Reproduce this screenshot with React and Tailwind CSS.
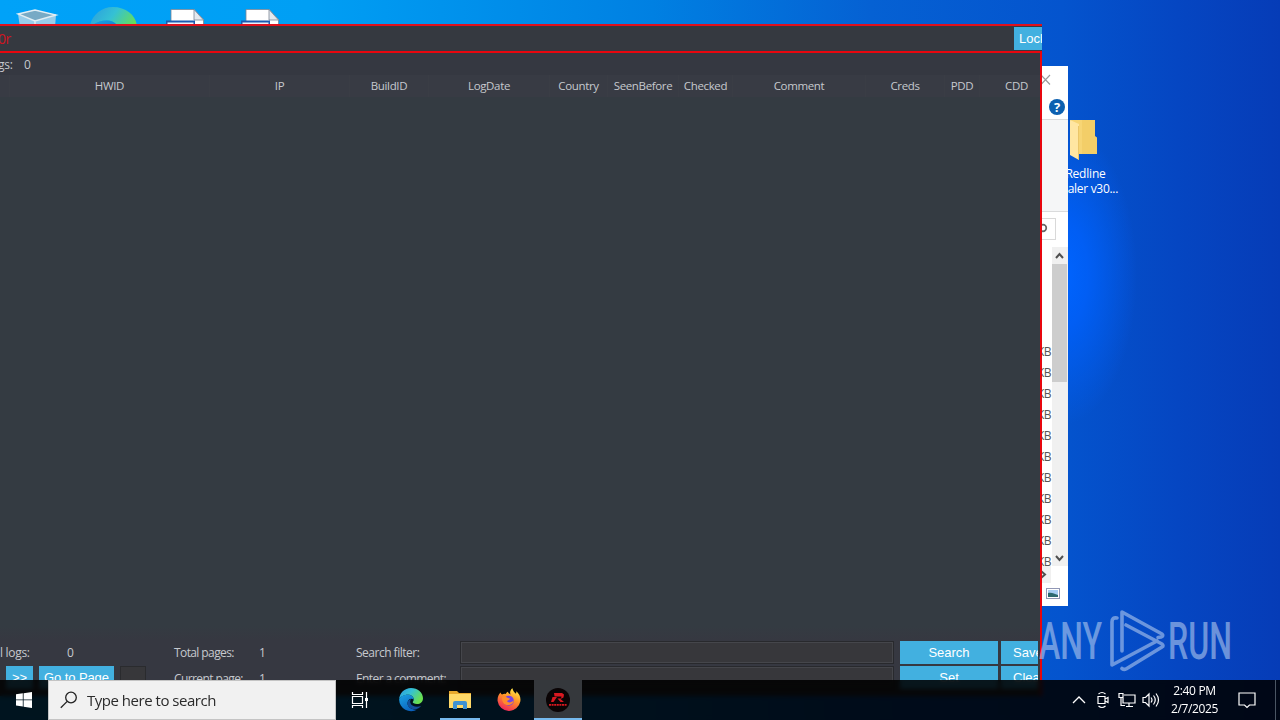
import React from 'react';

const columns = [
  { label: '', width: 'w-[10px]' },
  { label: 'HWID', width: 'w-[200px]' },
  { label: 'IP', width: 'w-[140px]' },
  { label: 'BuildID', width: 'w-[79px]' },
  { label: 'LogDate', width: 'w-[121px]' },
  { label: 'Country', width: 'w-[58px]' },
  { label: 'SeenBefore', width: 'w-[71px]' },
  { label: 'Checked', width: 'w-[54px]' },
  { label: 'Comment', width: 'w-[133px]' },
  { label: 'Creds', width: 'w-[79px]' },
  { label: 'PDD', width: 'w-[35px]' },
  { label: 'CDD', width: 'w-[74px]' }
];

const fileRows = [1, 2, 3, 4, 5, 6, 7, 8, 9, 10, 11];

const EdgeIcon = ({ size, id }) => (
  <svg width={size} height={size} viewBox="0 0 24 24" className="shrink-0">
    <defs>
      <linearGradient id={`${id}-top`} x1="0" y1="0" x2="1" y2="0.5">
        <stop offset="0" stopColor="#2a9be0" />
        <stop offset="0.5" stopColor="#35c1d4" />
        <stop offset="1" stopColor="#6ae04e" />
      </linearGradient>
      <linearGradient id={`${id}-low`} x1="0" y1="0" x2="0.6" y2="1">
        <stop offset="0" stopColor="#1aa3e4" />
        <stop offset="1" stopColor="#0b61bd" />
      </linearGradient>
    </defs>
    <path d="M12 0C18.8 0 24 4.6 24 10.2c0 3.6-2.7 5.8-6 5.8-2.8 0-4.3-1-4.3-1.9 0-.7 1-.9 1-2.7C14.700 8.600 12 6.800 9 6.800 4.500 6.800 1 9.200.1 11.500.5 5 5.500 0 12 0z" fill={`url(#${id}-top)`} />
    <path d="M.1 11.500C1 8.500 4.800 6.700 8.800 6.700c3.500 0 5.900 2.100 5.900 4.700-3-2-6.200.1-6.200 3.700 0 4.700 4.900 7.300 9.800 6.400A12 12 0 0 1 .1 11.500z" fill={`url(#${id}-low)`} />
    <path d="M8.500 15c0 4.700 4.600 7 9 6 2-.5 3.700-1.800 4.600-3.200-3 1.600-9.400 1.200-10.700-2.800-.6-1.800.1-3 .9-3.900-2 .3-3.800 1.800-3.800 3.900z" fill="#134f9b" />
  </svg>
);

const DocIcon = () => (
  <svg width="38" height="16" viewBox="0 0 38 16">
    <path d="M5 16V.5h23l9.500 10V16z" fill="#fff" stroke="#7b8796" strokeWidth="0.8" />
    <path d="M28 .5v10.500h9.500z" fill="#e4e9ef" stroke="#7b8796" strokeWidth="0.8" />
    <path d="M0 11.500h29V16H0z" fill="#1b5ab0" />
    <path d="M1.500 13.500h26V16h-26z" fill="#e9f2fc" />
  </svg>
);

const Desktop = () => (
  <div className="absolute inset-0 bg-[linear-gradient(90deg,#00a2f8_0%,#009ff4_24%,#0080e2_51%,#0561d3_68%,#0454ce_83%,#0546c2_92%,#063cb7_100%)]">
    <div className="absolute inset-0 bg-[radial-gradient(ellipse_75px_150px_at_1062px_275px,#0064ff_0%,#0060fadd_35%,#0058e000_100%)]" />
    <svg width="60" height="24" viewBox="0 0 60 24" className="absolute left-0 top-0">
      <path d="M18 14l17-4 21 5-1 12H20z" fill="#b4d5e8" opacity=".85" />
      <path d="M18 14l17-4 21 5-21 6z" fill="#78aac5" />
      <path d="M18 14l17-4 21 5-21 6zM35 21v6" fill="none" stroke="#e2eef4" strokeWidth="1.400" />
    </svg>
    <div className="absolute left-[89px] top-[7px] h-[18px] overflow-hidden"><EdgeIcon size={48} id="desk" /></div>
    <div className="absolute left-[166px] top-[9px]"><DocIcon /></div>
    <div className="absolute left-[241px] top-[9px]"><DocIcon /></div>

    <div className="absolute left-[1047px] top-[119px] w-[77px] flex flex-col items-center text-white text-[12px] leading-[15px]">
      <svg width="32" height="43" viewBox="0 0 32 43" className="-ml-[3px]">
        <path d="M2 1h25v23l1.500 1v10H11z" fill="#f7d574" />
        <path d="M14 1h13v16l2 1.500v16.500H14z" fill="#f3ce68" />
        <path d="M2 1l9 4v36l-9-5z" fill="#ffe6a2" />
        <path d="M10.500 7v34" stroke="#e3b850" strokeWidth=".7" />
      </svg>
      <span className="mt-[4px] tracking-[-0.2px]">Redline</span>
      <span className="whitespace-nowrap tracking-[-0.3px] -ml-[2px]">Stealer v30...</span>
    </div>
  </div>
);

const Watermark = () => (
  <svg width="200" height="66" viewBox="1036 608 200 66" className="absolute left-[1036px] top-[608px] opacity-60 pointer-events-none">
    <g fill="#b0c8ee" fontFamily="Roboto, sans-serif" fontSize="52" fontWeight="500">
      <text x="1039" y="659" textLength="63" lengthAdjust="spacingAndGlyphs">ANY</text>
      <text x="1168" y="659" textLength="64" lengthAdjust="spacingAndGlyphs">RUN</text>
    </g>
    <g fill="none" stroke="#b0c8ee" strokeWidth="3.600" strokeLinejoin="round" strokeLinecap="round">
      <path d="M1117 618q-5-1-5 4v43l45-24" />
      <path d="M1122 651v-39l40 22q2 2-1 3l-3 .5" />
      <path d="M1126 625l36 19q2 2 0 3l-36 22q-2 1-4-.5" />
    </g>
  </svg>
);

const ExplorerWindow = () => (
  <div className="absolute left-[1000px] top-[66px] w-[68px] h-[540px] bg-white flex flex-col text-[#555]">
    <div className="h-[53px] shrink-0 flex flex-col items-end">
      <svg width="28" height="29" viewBox="0 0 28 29"><path d="M1 9l9 9.500M10 9l-9 9.500" stroke="#999" strokeWidth="1.100" /></svg>
      <div className="w-4 h-4 mr-[3px] mt-1 rounded-full bg-[#0c60b0] text-white text-[13px] leading-4 font-bold text-center">?</div>
    </div>
    <div className="h-[93px] shrink-0 bg-[#f5f6f7] border-y border-[#dadbdc]" />
    <div className="h-[22px] mt-[6px] mr-[12px] shrink-0 border border-[#d9d9d9] flex items-center justify-end pr-[7px]">
      <svg width="12" height="12" viewBox="0 0 12 12"><circle cx="7" cy="5" r="3.300" fill="none" stroke="#666" strokeWidth="1.700" /></svg>
    </div>
    <div className="h-[319px] mt-[7px] shrink-0 flex">
      <div className="flex-1 overflow-hidden pt-[94px] pr-[1px] text-right text-[12px]">
        {fileRows.map(row => (
          <div key={row} className="h-[21px] leading-[21px] tracking-[-0.6px]">KB</div>
        ))}
      </div>
      <div className="w-[16px] bg-[#f0f0f0] flex flex-col">
        <svg width="16" height="17" viewBox="0 0 16 17"><path d="M4 11l3.500-4 3.500 4" fill="none" stroke="#505050" strokeWidth="2" /></svg>
        <div className="h-[118px] w-[15px] bg-[#cdcdcd]" />
        <div className="flex-1" />
        <svg width="16" height="17" viewBox="0 0 16 17"><path d="M4 7l3.500 4L11 7" fill="none" stroke="#505050" strokeWidth="2" /></svg>
      </div>
    </div>
    <div className="h-[17px] w-[51px] shrink-0 bg-[#f0f0f0] flex justify-end">
      <svg width="12" height="17" viewBox="0 0 12 17"><path d="M2 5l4 3.500L2 12" fill="none" stroke="#505050" strokeWidth="2" /></svg>
    </div>
    <div className="flex-1 flex justify-end pr-[8px] pt-[5px]">
      <svg width="14" height="11" viewBox="0 0 14 11">
        <rect x=".5" y=".5" width="13" height="10" fill="#fff" stroke="#9197b5" />
        <path d="M2 2h10v7H2z" fill="#a5cdf3" />
        <path d="M2 5c4-1 6 1 10 2v2H2z" fill="#2d6a70" />
      </svg>
    </div>
  </div>
);

const BlueButton = ({ className, children }) => (
  <button className={`h-[23px] shrink-0 bg-[#42b0e0] text-white text-[13px] leading-[23px] font-['Liberation_Sans',sans-serif] whitespace-nowrap overflow-hidden ${className}`}>
    {children}
  </button>
);

const PanelWindow = () => (
  <div className="absolute left-0 top-[24px] w-[1042px] h-[672px] flex flex-col bg-[#343b42] border-t-2 border-[#e0101c] text-[#c6c9ce] text-[12px] tracking-[-0.3px]">
    <div className="h-[25px] shrink-0 flex items-center justify-between bg-[#353940]">
      <span className="-ml-[2px] text-[#d01420] text-[14px] leading-none tracking-[-0.4px]">0r</span>
      <BlueButton className="w-[28px] pl-[5px] text-left tracking-normal">Lock</BlueButton>
    </div>
    <div className="flex-1 flex flex-col min-h-0 border-t-2 border-r-2 border-[#e8060e]">
      <div className="h-[22px] pt-[2px] shrink-0 flex items-center bg-[#353841]">
        <div className="w-[24px] -indent-[2px]">gs:</div>
        <span>0</span>
      </div>
      <div className="h-[22px] shrink-0 flex overflow-hidden bg-[#383b44]">
        {columns.map((col, i) => (
          <div key={i} className={`${col.width} shrink-0 flex items-center justify-center border-r border-[#3a3d45] text-[11.5px] tracking-[-0.35px]`}>
            {col.label}
          </div>
        ))}
      </div>
      <div className="flex-1" />
      <div className="h-[70px] shrink-0 pt-[15px] bg-linear-to-b from-[#343b42] to-[#363841] to-20% flex flex-col gap-[2px] overflow-hidden">
        <div className="flex items-center h-[23px] shrink-0 w-[1038px] overflow-hidden">
          <div className="w-[67px] shrink-0">l logs:</div>
          <div className="w-[107px] shrink-0">0</div>
          <div className="w-[85px] shrink-0 tracking-[-0.6px]">Total pages:</div>
          <div className="w-[97px] shrink-0">1</div>
          <div className="w-[104px] shrink-0 tracking-[-0.5px]">Search filter:</div>
          <div className="w-[434px] h-[23px] shrink-0 bg-[#37373b] border border-[#28292d] outline outline-1 -outline-offset-2 outline-[#45464b]" />
          <BlueButton className="w-[98px] ml-[6px] text-center tracking-normal">Search</BlueButton>
          <BlueButton className="w-[50px] ml-[3px] pl-[12px] text-left tracking-normal">Save</BlueButton>
        </div>
        <div className="flex items-center h-[23px] shrink-0 w-[1038px] overflow-hidden">
          <BlueButton className="w-[27px] ml-[6px] text-center tracking-normal">&gt;&gt;</BlueButton>
          <BlueButton className="w-[75px] ml-[6px] text-center tracking-[-0.1px]">Go to Page</BlueButton>
          <div className="w-[26px] h-[23px] ml-[6px] mr-[28px] shrink-0 bg-[#37373a] border border-[#2a2b2e]" />
          <div className="w-[85px] shrink-0 pt-[3px] tracking-[-0.6px]">Current page:</div>
          <div className="w-[97px] shrink-0 pt-[3px]">1</div>
          <div className="w-[104px] shrink-0 pt-[3px] tracking-[-0.6px]">Enter a comment:</div>
          <div className="w-[434px] h-[23px] shrink-0 bg-[#37373b] border border-[#28292d] outline outline-1 -outline-offset-2 outline-[#45464b]" />
          <BlueButton className="w-[98px] ml-[6px] text-center tracking-normal">Set</BlueButton>
          <BlueButton className="w-[50px] ml-[3px] pl-[12px] text-left tracking-normal">Clear</BlueButton>
        </div>
      </div>
    </div>
  </div>
);

const Taskbar = () => (
  <div className="absolute left-0 bottom-0 w-full h-[40px] flex items-center bg-black/88 backdrop-blur-[2px] text-white">
    <div className="w-[48px] flex justify-center">
      <svg width="16" height="16" viewBox="0 0 16 16" fill="#fff">
        <path d="M0 2.300l6.800-1v6.200H0zM7.600 1.200L16 0v7.500H7.600zM0 8.300h6.800v6.300L0 13.600zM7.600 8.300H16V16l-8.400-1.200z" />
      </svg>
    </div>
    <div className="w-[288px] h-[40px] bg-[#f1f1f1] border border-[#c4c4c4] flex items-center pl-[11px] text-[#2b2b2b]">
      <svg width="18" height="18" viewBox="0 0 18 18" fill="none" stroke="#222" strokeWidth="1.300">
        <circle cx="11" cy="6.500" r="5.300" />
        <path d="M7.200 10.400L.8 16.800" />
      </svg>
      <span className="ml-[9px] text-[15px] tracking-[-0.48px]">Type here to search</span>
    </div>
    <div className="w-[49px] pr-px flex justify-center">
      <svg width="18" height="18" viewBox="0 0 18 18" fill="none" stroke="#fff" strokeWidth="1.200">
        <path d="M1.500 1v2.500h10V1M1.500 17v-2.500h10V17M1.500 5.500h10v7h-10zM15.500 1v16" />
        <path d="M14 7h3v3h-3z" fill="#fff" stroke="none" />
      </svg>
    </div>
    <div className="w-[51px] flex justify-center"><EdgeIcon size={24} id="task" /></div>
    <div className="w-[48px] h-[40px] flex flex-col items-center">
      <svg width="22" height="20" viewBox="0 0 22 20" className="mt-[10px]">
        <path d="M0 1h8l2 2h12v15H0z" fill="#e8a92c" />
        <path d="M0 4h22v14H0z" fill="#ffd968" />
        <path d="M4 19v-6q0-2 2-2h10q2 0 2 2v6h-4v-4H8v4z" fill="#3f92d2" />
      </svg>
      <div className="mt-[8px] w-[40px] h-[2px] bg-[#76b9ed]" />
    </div>
    <div className="w-[50px] flex justify-center">
      <svg width="24" height="24" viewBox="0 0 24 24">
        <defs>
          <linearGradient id="fox" x1=".8" y1="0" x2=".3" y2="1">
            <stop offset="0" stopColor="#fff14a" />
            <stop offset=".45" stopColor="#ff9327" />
            <stop offset="1" stopColor="#f0235c" />
          </linearGradient>
        </defs>
        <path d="M3.500 4.500c.3 1 .8 1.600 1.500 2 1.200-.7 2.500-.8 3.800-.6C9.500 4.500 10.500 4 11 3.800c0 1 1 2 2.500 2.700C12.500 4 13.500 1.500 15.500.3c.3 2.700 2 4 3.500 5.500l.5-2.500c3 3 4.500 6 3.800 10.200A11.500 11.500 0 0 1 .6 13C.3 9.500 1.500 6.500 3.500 4.500z" fill="url(#fox)" />
        <circle cx="11.800" cy="12.700" r="5" fill="#7543e3" />
        <path d="M5 9c2-1 4-.5 6 1l2 .5c-.3 1.500-2 1.700-3 2.500.5 2 4.500 2 6.500-.5.5 4-7 6.500-10 2.500C5 13 5 11 5 9z" fill="#ff8b2c" />
      </svg>
    </div>
    <div className="w-[48px] h-[40px] flex flex-col items-center bg-[#35383c]">
      <svg width="24" height="24" viewBox="0 0 24 24" className="mt-[8px]">
        <circle cx="12" cy="12" r="12" fill="#0a0405" />
        <path d="M8 5h8l2 1.500-.5 3-3 1.500 3.500 3h-3.500l-3-3.500h3.500l.5-2H8.500zM6.500 9h4.500l-3.500 5H5z" fill="#d91820" />
        <path d="M3 16.800h18" stroke="#d91820" strokeWidth="1.800" strokeDasharray="2 .6" />
      </svg>
      <div className="mt-[6px] w-[48px] h-[2px] bg-[#76b9ed]" />
    </div>

    <div className="ml-auto flex items-center h-full">
      <svg width="14" height="8" viewBox="0 0 14 8" fill="none" stroke="#fff" strokeWidth="1.300"><path d="M1 7l6-6 6 6" /></svg>
      <svg width="14" height="18" viewBox="0 0 14 18" className="ml-[10px]" fill="none" stroke="#fff" strokeWidth="1.200">
        <path d="M2 5.500h7v7H2zM9 8l3-1.500v5L9 10M2.500 3q3.500-3 7 0M2.500 15q3.500 3 7 0" />
      </svg>
      <svg width="18" height="16" viewBox="0 0 18 16" className="ml-[8px]" fill="none" stroke="#fff" strokeWidth="1.200">
        <path d="M6 3h11v8H5V6M8 14.500h7M11 11v3.500M1 1.500h4v4H1zM3 5.500v8h4" />
      </svg>
      <svg width="18" height="16" viewBox="0 0 18 16" className="ml-[6px]" fill="none" stroke="#fff" strokeWidth="1.200">
        <path d="M1 5.500h2.500L7 2v12l-3.500-3.500H1zM9 5.500q2 2.500 0 5M11.500 3.500q3.500 4.500 0 9M14 1.500q5 6.500 0 13" />
      </svg>
      <div className="w-[68px] pl-[1px] flex flex-col items-center text-[12px] leading-[18px] tracking-[-0.35px]">
        <span>2:40 PM</span>
        <span>2/7/2025</span>
      </div>
      <svg width="18" height="18" viewBox="0 0 18 18" className="ml-[10px]" fill="none" stroke="#fff" strokeWidth="1.200">
        <path d="M1 2h16v12h-5.500L9 16.500 6.500 14H1z" />
      </svg>
      <div className="ml-[19px] mr-1 w-px h-full bg-[#4a5563]" />
    </div>
  </div>
);

const App = () => {
  return (
    <div className="relative w-full h-screen overflow-hidden font-['Open_Sans','Noto_Sans',sans-serif]">
      <Desktop />
      <ExplorerWindow />
      <PanelWindow />
      <Watermark />
      <Taskbar />
    </div>
  );
};

export default App;
